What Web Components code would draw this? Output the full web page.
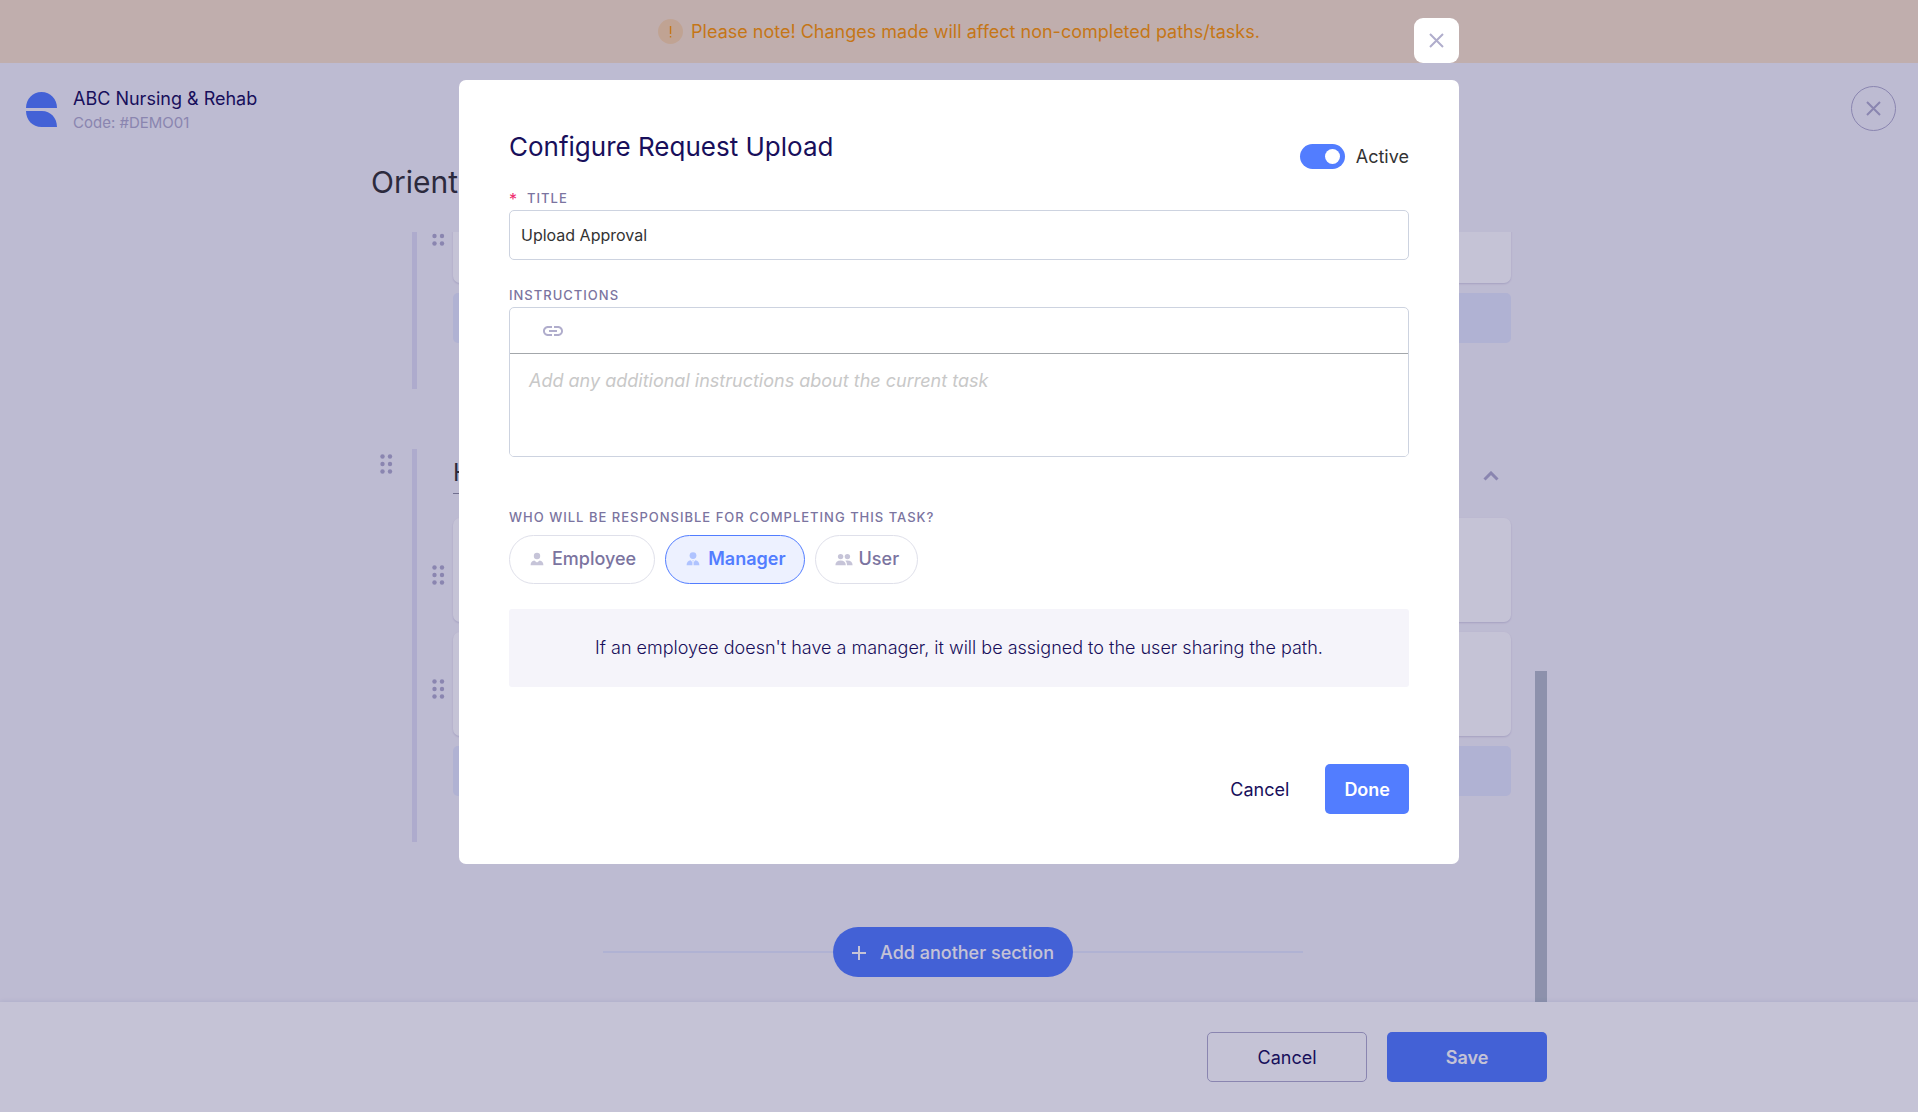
<!DOCTYPE html>
<html lang="en">
<head>
<meta charset="utf-8">
<meta name="viewport" content="width=device-width, initial-scale=1">
<title>Configure Request Upload</title>
<style>
  html, body { margin: 0; height: 100%; }
  body {
    --ink: #180f5b;
    --muted: #7b74a0;
    --soft: #b0adcc;
    --primary: #527dff;
    --surface: #f5f4fa;
    --line: #cdd3e0;
    font-family: Inter, "Liberation Sans", sans-serif;
    font-size: 18px;
    line-height: 24px;
    color: var(--ink);
  }
</style>
</head>
<body>
<path-editor>
  <notice-banner slot="banner">Please note! Changes made will affect non-completed paths/tasks.</notice-banner>
  <company-header slot="header" name="ABC Nursing &amp; Rehab" code="#DEMO01"></company-header>
  <span slot="title">Orient</span>
  <path-section>
    <task-card></task-card>
    <task-card></task-card>
    <add-task></add-task>
  </path-section>
  <path-section heading="HR">
    <task-card></task-card>
    <task-card></task-card>
    <add-task></add-task>
  </path-section>
  <add-section>Add another section</add-section>
  <ui-button slot="actions" variant="outline" wide>Cancel</ui-button>
  <ui-button slot="actions" variant="primary" wide>Save</ui-button>
</path-editor>

<modal-dialog heading="Configure Request Upload">
  <toggle-switch slot="status" checked>Active</toggle-switch>
  <text-field label="Title" value="Upload Approval" required></text-field>
  <rich-field label="Instructions" placeholder="Add any additional instructions about the current task"></rich-field>
  <assignee-picker label="Who will be responsible for completing this task?" selected="Manager"></assignee-picker>
  <info-note>If an employee doesn't have a manager, it will be assigned to the user sharing the path.</info-note>
  <ui-button slot="actions" variant="text">Cancel</ui-button>
  <ui-button slot="actions" variant="primary">Done</ui-button>
</modal-dialog>

<script>
const reset = `
  *, *::before, *::after { box-sizing: border-box; }
  button, input, textarea { font: inherit; color: inherit; margin: 0; }
  button { cursor: pointer; }
  svg { display: block; flex: none; }
`;

const labelStyle = `
  .label { display: block; font-size: 13px; line-height: 16px; font-weight: 500; letter-spacing: 1px; text-transform: uppercase; color: var(--muted); }
`;

const closeIcon = `<svg width="15" height="15" viewBox="0 0 15 15" fill="none" stroke="currentColor" stroke-width="2"><path d="M1 1l13 13M14 1l-13 13"/></svg>`;

const people = {
  Employee: `<svg width="14" height="14" viewBox="0 0 14 14" fill="currentColor"><circle cx="7" cy="4" r="3.2"/><path d="M.6 13.2c0-2.6 1.4-4.2 3.7-4.6L7 10.4l2.7-1.8c2.3.4 3.7 2 3.7 4.6z"/></svg>`,
  Manager: `<svg width="14" height="14" viewBox="0 0 14 14" fill="currentColor"><circle cx="7" cy="3.6" r="3.4"/><path d="M.6 13.2c0-2.8 1.6-4.6 4-4.9L6.4 10.200v3zM13.4 13.2c0-2.800-1.600-4.600-4-4.900L7.600 10.200v3zM6.200 8.600h1.600L7 9.800z"/></svg>`,
  User: `<svg width="18" height="14" viewBox="0 0 18 14" fill="currentColor"><circle cx="5.6" cy="4.6" r="2.7"/><circle cx="12.4" cy="4.6" r="2.7"/><path d="M.4 13.2c0-2.900 1.900-4.700 5.200-4.700s5.200 1.800 5.200 4.700zM12 13.200c0-1.900-.6-3.400-1.700-4.400.6-.2 1.300-.3 2.100-.3 3.300 0 5.200 1.800 5.200 4.700z"/></svg>`
};

class BaseElement extends HTMLElement {
  constructor() {
    super();
    this.attachShadow({ mode: "open" });
  }
  connectedCallback() {
    this.shadowRoot.innerHTML = `<style>${reset}</style>${this.render()}`;
  }
  attr(name) {
    const el = document.createElement("i");
    el.textContent = this.getAttribute(name) || "";
    return el.innerHTML;
  }
}

class PathEditor extends BaseElement {
  render() {
    return `
      <style>
        :host { display: flex; flex-direction: column; height: 100vh; min-height: 720px; background: var(--surface); }
        .column { width: 100%; max-width: 1176px; margin: 0 auto; }
        h1.column { margin: 6px auto 30px; font-size: 30px; line-height: 40px; font-weight: 400; color: #333; }
        main { flex: 1; min-height: 0; display: flex; }
        .list { flex: 1; min-width: 0; display: flex; flex-direction: column; justify-content: flex-end; gap: 60px; overflow: hidden; padding-bottom: 25px; }
        .track { flex: none; width: 12px; display: flex; align-items: flex-end; }
        .thumb { width: 100%; height: 43%; background: #b4bdc7; }
        footer { flex: none; background: #fff; box-shadow: 0 -1px 4px rgba(82, 110, 160, .1); position: relative; padding: 30px 0; }
        footer .column { display: flex; justify-content: flex-end; gap: 20px; }
      </style>
      <slot name="banner"></slot>
      <slot name="header"></slot>
      <h1 class="column"><slot name="title"></slot></h1>
      <main class="column">
        <div class="list"><slot></slot></div>
        <div class="track"><div class="thumb"></div></div>
      </main>
      <footer><div class="column"><slot name="actions"></slot></div></footer>
    `;
  }
}

class NoticeBanner extends BaseElement {
  render() {
    return `
      <style>
        :host { flex: none; display: flex; align-items: center; justify-content: center; gap: 8px; height: 63px; background: #f9e3c9; color: #ff9900; }
        .mark { width: 25px; height: 25px; border-radius: 50%; background: #f9d5a6; display: grid; place-items: center; }
      </style>
      <span class="mark"><svg width="3" height="12" viewBox="0 0 3 12" fill="currentColor"><path d="M.8 0h1.400v8H.8zM.8 10h1.400v1.600H.8z"/></svg></span>
      <slot></slot>
    `;
  }
}

class CompanyHeader extends BaseElement {
  render() {
    return `
      <style>
        :host { flex: none; display: flex; align-items: flex-start; padding: 23px 22px 25px 26px; }
        .logo { margin-top: 6px; }
        .text { flex: 1; margin: 1px 16px 0; height: 44px; }
        .code { font-size: 15px; color: var(--soft); }
        button { width: 45px; height: 45px; padding: 0; border: 1px solid var(--soft); border-radius: 50%; background: none; color: var(--soft); display: grid; place-items: center; }
      </style>
      <svg class="logo" width="31" height="35" viewBox="0 0 31 35" fill="#527dff"><path d="M0 16C0 7 6.500 0 15.500 0S31 7 31 16zM0 19h16c8.500 0 15 6.800 15 16H15.500C6.500 35 0 28 0 19z"/></svg>
      <div class="text">
        <div>${this.attr("name")}</div>
        <div class="code">Code: ${this.attr("code")}</div>
      </div>
      <button aria-label="Close editor">${closeIcon}</button>
    `;
  }
}

class DragHandle extends BaseElement {
  render() {
    const dots = [2.5, 10, 17.5].map(y => `<circle cx="2.5" cy="${y}" r="2.2"/><circle cx="10" cy="${y}" r="2.2"/>`).join("");
    return `
      <style>:host { display: block; flex: none; color: var(--soft); }</style>
      <svg width="13" height="20" viewBox="0 0 13 20" fill="currentColor">${dots}</svg>
    `;
  }
}

class PathSection extends BaseElement {
  render() {
    return `
      <style>
        :host { flex: none; display: flex; gap: 19px; padding: 0 24px 0 9px; }
        drag-handle { margin-top: 5px; }
        .body { flex: 1; border-left: 5px solid #e1dff3; padding: 0 0 46px 15px; display: flex; flex-direction: column; gap: 10px; }
        header { display: flex; align-items: center; justify-content: space-between; margin: 0 0 6px 21px; padding-right: 12px; height: 53px; }
        input { width: 400px; height: 37px; padding: 0 0 6px; border: 0; border-bottom: 1px solid #8f8fa0; border-radius: 0; background: none; font-size: 24px; color: #333; }
        button { padding: 0; border: 0; background: none; color: var(--soft); }
      </style>
      <drag-handle></drag-handle>
      <div class="body">
        <header>
          <input aria-label="Section name" value="${this.attr("heading")}">
          <button aria-label="Collapse section"><svg width="16" height="10" viewBox="0 0 16 10" fill="none" stroke="currentColor" stroke-width="3"><path d="M1.500 8.500L8 2l6.500 6.500"/></svg></button>
        </header>
        <slot></slot>
      </div>
    `;
  }
}

class TaskCard extends BaseElement {
  render() {
    return `
      <style>
        :host { display: flex; align-items: center; gap: 8px; }
        drag-handle { padding-top: 10px; }
        .card { flex: 1; height: 104px; border-radius: 7px; background: #fff; box-shadow: 0 1px 2px rgba(24, 15, 91, .15); }
      </style>
      <drag-handle></drag-handle>
      <div class="card"></div>
    `;
  }
}

class AddTask extends BaseElement {
  render() {
    return `
      <style>
        :host { display: flex; padding-left: 21px; }
        button { flex: 1; height: 50px; border: 0; border-radius: 5px; background: #e3e8fb; }
      </style>
      <button aria-label="Add task"></button>
    `;
  }
}

class AddSection extends BaseElement {
  render() {
    return `
      <style>
        :host { flex: none; display: flex; align-items: center; width: 100%; max-width: 700px; margin: 25px auto 0; }
        :host::before, :host::after { content: ""; flex: 1; height: 2px; background: #e3e8fb; }
        button { display: flex; align-items: center; gap: 14px; height: 50px; padding: 1px 19px 0; border: 0; border-radius: 25px; background: var(--primary); color: #fff; font-weight: 500; }
      </style>
      <button><svg width="14" height="14" viewBox="0 0 14 14" stroke="currentColor" stroke-width="2"><path d="M7 0v14M0 7h14"/></svg><slot></slot></button>
    `;
  }
}

class UiButton extends BaseElement {
  render() {
    return `
      <style>
        :host { display: block; }
        button { height: 50px; padding: 2px 18px 0; border: 1px solid transparent; border-radius: 5px; background: none; }
        :host([wide]) button { width: 160px; }
        :host([variant="outline"]) button { border-color: var(--soft); }
        :host([variant="primary"]) button { background: var(--primary); color: #fff; font-weight: 600; }
        :host([variant="text"]) button { padding: 2px 15px 0; }
      </style>
      <button><slot></slot></button>
    `;
  }
}

class ModalDialog extends BaseElement {
  render() {
    return `
      <style>
        :host { position: fixed; inset: 0; overflow: auto; background: rgba(24, 15, 91, .25); padding: 80px 20px; }
        .dialog { position: relative; max-width: 1000px; margin: 0 auto; padding: 50px; border-radius: 7px; background: #fff; }
        .close { position: absolute; right: 0; bottom: calc(100% + 17px); width: 45px; height: 45px; padding: 0; border: 0; border-radius: 9px; background: #fff; color: var(--soft); display: grid; place-items: center; }
        header { display: flex; justify-content: space-between; align-items: flex-end; height: 39px; margin-bottom: 21px; }
        h2 { align-self: flex-start; margin: 0; font-size: 26px; line-height: 34px; font-weight: 400; }
        .actions { display: flex; justify-content: flex-end; gap: 20px; margin-top: 77px; }
      </style>
      <section class="dialog" role="dialog" aria-modal="true" aria-labelledby="heading">
        <button class="close" aria-label="Close">${closeIcon}</button>
        <header>
          <h2 id="heading">${this.attr("heading")}</h2>
          <slot name="status"></slot>
        </header>
        <slot></slot>
        <div class="actions"><slot name="actions"></slot></div>
      </section>
    `;
  }
  connectedCallback() {
    super.connectedCallback();
    this.shadowRoot.querySelector(".close").onclick = () => this.remove();
  }
}

class ToggleSwitch extends BaseElement {
  render() {
    return `
      <style>
        :host { display: block; color: #333; }
        label { display: flex; align-items: center; gap: 11px; cursor: pointer; }
        span { padding-top: 1px; }
        input { appearance: none; width: 45px; height: 25px; padding: 5px; border-radius: 13px; background: #d5d3e2; display: flex; }
        input::before { content: ""; width: 15px; height: 15px; border-radius: 50%; background: #fff; }
        input:checked { background: var(--primary); justify-content: flex-end; }
      </style>
      <label><input type="checkbox" role="switch" ${this.hasAttribute("checked") ? "checked" : ""}><span><slot></slot></span></label>
    `;
  }
}

class TextField extends BaseElement {
  render() {
    return `
      <style>
        ${labelStyle}
        :host { display: block; margin-bottom: 27px; }
        label.label { display: flex; gap: 10px; }
        .star { font-size: 16px; line-height: 18px; height: 16px; font-weight: 400; color: #ee2a6c; letter-spacing: 0; }
        input { display: block; width: 100%; height: 50px; margin-top: 4px; padding: 0 11px; border: 1px solid var(--line); border-radius: 5px; background: #fff; font-size: 16px; color: #333; }
      </style>
      <label class="label" for="field">${this.hasAttribute("required") ? `<span class="star">*</span>` : ""}<span>${this.attr("label")}</span></label>
      <input id="field" value="${this.attr("value")}">
    `;
  }
}

class RichField extends BaseElement {
  render() {
    return `
      <style>
        ${labelStyle}
        :host { display: block; margin-bottom: 52px; }
        .box { margin-top: 4px; border: 1px solid var(--line); border-radius: 5px; overflow: hidden; }
        .toolbar { height: 46px; padding: 0 33px; display: flex; align-items: center; border-bottom: 1px solid #a3a7ab; }
        button { padding: 0; border: 0; background: none; color: var(--soft); }
        textarea { display: block; width: 100%; height: 102px; padding: 15px 19px; border: 0; outline: 0; resize: none; color: #333; }
        textarea::placeholder { color: #c8c8c8; font-style: italic; }
      </style>
      <label class="label" for="field">${this.attr("label")}</label>
      <div class="box">
        <div class="toolbar"><button aria-label="Insert link"><svg width="20" height="10" viewBox="2 7 20 10" fill="currentColor"><path d="M3.900 12c0-1.710 1.390-3.100 3.100-3.100h4V7H7c-2.760 0-5 2.240-5 5s2.240 5 5 5h4v-1.900H7c-1.710 0-3.100-1.390-3.100-3.100zM8 13h8v-2H8v2zm9-6h-4v1.900h4c1.710 0 3.100 1.390 3.100 3.100s-1.390 3.100-3.100 3.100h-4V17h4c2.760 0 5-2.240 5-5s-2.240-5-5-5z"/></svg></button></div>
        <textarea id="field" placeholder="${this.attr("placeholder")}"></textarea>
      </div>
    `;
  }
}

class AssigneePicker extends BaseElement {
  render() {
    const selected = this.getAttribute("selected");
    const options = Object.keys(people).map(name => `
      <label class="pill"><input type="radio" name="assignee" value="${name}" ${name === selected ? "checked" : ""}>${people[name]}<span>${name}</span></label>
    `).join("");
    return `
      <style>
        ${labelStyle}
        :host { display: block; margin-bottom: 25px; }
        fieldset { margin: 0; padding: 0; border: 0; }
        legend { padding: 0; }
        .row { display: flex; flex-wrap: wrap; gap: 10px; margin-top: 10px; }
        .pill { display: flex; align-items: center; gap: 8px; height: 49px; padding: 0 18px 1px 20px; border: 1px solid #dfe0ea; border-radius: 25px; color: var(--muted); font-weight: 500; cursor: pointer; }
        .pill:last-child { gap: 6px; padding-left: 19px; }
        .pill svg { color: #c6c4d8; }
        .pill:has(:checked) { border-color: var(--primary); background: #edf1ff; color: var(--primary); font-weight: 600; }
        .pill:has(:checked) svg { color: #afc3ff; }
        input { appearance: none; position: absolute; width: 0; height: 0; }
      </style>
      <fieldset>
        <legend class="label">${this.attr("label")}</legend>
        <div class="row">${options}</div>
      </fieldset>
    `;
  }
}

class InfoNote extends BaseElement {
  render() {
    return `
      <style>
        :host { display: block; padding: 27px 20px; border-radius: 3px; background: var(--surface); text-align: center; font-weight: 300; }
      </style>
      <slot></slot>
    `;
  }
}

customElements.define("drag-handle", DragHandle);
customElements.define("ui-button", UiButton);
customElements.define("path-editor", PathEditor);
customElements.define("notice-banner", NoticeBanner);
customElements.define("company-header", CompanyHeader);
customElements.define("path-section", PathSection);
customElements.define("task-card", TaskCard);
customElements.define("add-task", AddTask);
customElements.define("add-section", AddSection);
customElements.define("modal-dialog", ModalDialog);
customElements.define("toggle-switch", ToggleSwitch);
customElements.define("text-field", TextField);
customElements.define("rich-field", RichField);
customElements.define("assignee-picker", AssigneePicker);
customElements.define("info-note", InfoNote);
</script>
</body>
</html>
